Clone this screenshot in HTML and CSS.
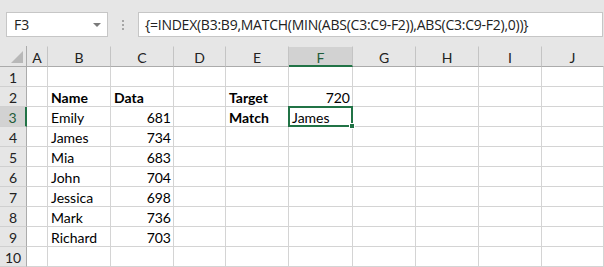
FILE: index.html
```html
<!DOCTYPE html>
<html>
<head>
<meta charset="utf-8">
<link rel="stylesheet" href="styles.css">
</head>
<body>
<div class="app">
  <div class="toolbar">
    <div class="namebox"><span class="name">F3</span><span class="caret"></span></div>
    <div class="grip"><i></i><i></i><i></i></div>
    <div class="formula">{=INDEX(B3:B9,MATCH(MIN(ABS(C3:C9-F2)),ABS(C3:C9-F2),0))}</div>
  </div>
  <div class="sheet">
    <div class="hd corner"><span class="tri"></span></div>
    <div class="hd col">A</div><div class="hd col">B</div><div class="hd col">C</div><div class="hd col">D</div><div class="hd col">E</div><div class="hd col sel">F</div><div class="hd col">G</div><div class="hd col">H</div><div class="hd col">I</div><div class="hd col last">J</div>

    <div class="hd row">1</div><div class="c"></div><div class="c"></div><div class="c"></div><div class="c"></div><div class="c"></div><div class="c"></div><div class="c"></div><div class="c"></div><div class="c"></div><div class="c"></div>

    <div class="hd row">2</div><div class="c"></div><div class="c b">Name</div><div class="c b">Data</div><div class="c"></div><div class="c b">Target</div><div class="c n">720</div><div class="c"></div><div class="c"></div><div class="c"></div><div class="c"></div>

    <div class="hd row rsel">3</div><div class="c"></div><div class="c">Emily</div><div class="c n">681</div><div class="c"></div><div class="c b">Match</div><div class="c active">James<span class="handle"></span></div><div class="c"></div><div class="c"></div><div class="c"></div><div class="c"></div>

    <div class="hd row">4</div><div class="c"></div><div class="c">James</div><div class="c n">734</div><div class="c"></div><div class="c"></div><div class="c"></div><div class="c"></div><div class="c"></div><div class="c"></div><div class="c"></div>

    <div class="hd row">5</div><div class="c"></div><div class="c">Mia</div><div class="c n">683</div><div class="c"></div><div class="c"></div><div class="c"></div><div class="c"></div><div class="c"></div><div class="c"></div><div class="c"></div>

    <div class="hd row">6</div><div class="c"></div><div class="c">John</div><div class="c n">704</div><div class="c"></div><div class="c"></div><div class="c"></div><div class="c"></div><div class="c"></div><div class="c"></div><div class="c"></div>

    <div class="hd row">7</div><div class="c"></div><div class="c">Jessica</div><div class="c n">698</div><div class="c"></div><div class="c"></div><div class="c"></div><div class="c"></div><div class="c"></div><div class="c"></div><div class="c"></div>

    <div class="hd row">8</div><div class="c"></div><div class="c">Mark</div><div class="c n">736</div><div class="c"></div><div class="c"></div><div class="c"></div><div class="c"></div><div class="c"></div><div class="c"></div><div class="c"></div>

    <div class="hd row">9</div><div class="c"></div><div class="c">Richard</div><div class="c n">703</div><div class="c"></div><div class="c"></div><div class="c"></div><div class="c"></div><div class="c"></div><div class="c"></div><div class="c"></div>

    <div class="hd row">10</div><div class="c"></div><div class="c"></div><div class="c"></div><div class="c"></div><div class="c"></div><div class="c"></div><div class="c"></div><div class="c"></div><div class="c"></div><div class="c"></div>
  </div>
</div>
</body>
</html>
```

FILE: styles.css
```css
* { box-sizing: border-box; }
html, body { margin: 0; padding: 0; background: #e6e6e6; }
.app {
  width: 604px;
  height: 267px;
  background: #e6e6e6;
  overflow: hidden;
  font-family: "Lato", "Open Sans", sans-serif;
}
.toolbar {
  height: 46px;
  display: flex;
  align-items: flex-start;
  padding: 12px 1px 0 6px;
}
.namebox {
  width: 102px;
  height: 25px;
  background: #fff;
  border: 1px solid #c6c6c6;
  display: flex;
  align-items: center;
  justify-content: space-between;
  padding: 0 6px 0 7px;
  font-family: "Open Sans", sans-serif;
  font-size: 14px;
  color: #222;
}
.caret {
  width: 0; height: 0;
  border-left: 4px solid transparent;
  border-right: 4px solid transparent;
  border-top: 4px solid #7a7a7a;
}
.grip {
  width: 30px;
  height: 25px;
  display: flex;
  flex-direction: column;
  align-items: center;
  justify-content: center;
  gap: 2px;
}
.grip i {
  display: block;
  width: 2px; height: 2px;
  background: #a6a6a6;
}
.formula {
  flex: 1;
  height: 25px;
  background: #fff;
  border: 1px solid #c6c6c6;
  padding: 0 0 0 6px;
  font-family: "Open Sans", sans-serif;
  font-size: 14px;
  line-height: 23px;
  color: #222;
  white-space: nowrap;
  letter-spacing: -0.25px;
}
.sheet {
  display: grid;
  grid-template-columns: 27px 21px 63px 63px 52px 63px 64px 63px 63px 63px 62px;
  grid-template-rows: 21px repeat(10, 20px);
  background: #fff;
}
.hd {
  background: #e6e6e6;
  font-size: 14px;
  color: #222;
  display: flex;
  align-items: center;
  justify-content: center;
}
.corner {
  position: relative;
  border-right: 1px solid #ababab;
  border-bottom: 1px solid #ababab;
}
.tri {
  position: absolute;
  right: 3px;
  bottom: 3px;
  width: 0; height: 0;
  border-left: 12px solid transparent;
  border-bottom: 12px solid #b8b8b8;
}
.col {
  border-bottom: 1px solid #ababab;
  border-right: 1px solid #c4c4c4;
  padding-top: 2px;
  border-top: 1px solid #e6e6e6;
}
.col.last { border-right-color: #e6e6e6; }
.col.sel {
  background: #d2d2d2;
  border-bottom: 2px solid #217346;
  color: #1f5c3a;
  padding-top: 3px;
}
.row {
  border-right: 1px solid #ababab;
  border-bottom: 1px solid #d0d0d0;
  padding-top: 1px;
}
.row.rsel {
  background: #d2d2d2;
  border-right: 2px solid #217346;
  color: #1f5c3a;
}
.c {
  border-right: 1px solid #d4d4d4;
  border-bottom: 1px solid #d4d4d4;
  font-size: 14px;
  color: #000;
  padding: 0 3px;
  display: flex;
  align-items: flex-end;
  line-height: 17px;
  white-space: nowrap;
  overflow: visible;
}
.c.b { font-weight: bold; }
.c.n { justify-content: flex-end; padding-right: 2px; }
.active {
  position: relative;
  outline: 2px solid #217346;
  outline-offset: -2px;
  margin-top: -1px;
  margin-left: -1px;
  padding-left: 4px;
}
.handle {
  position: absolute;
  right: -3px;
  bottom: -3px;
  width: 6px;
  height: 6px;
  background: #217346;
  border: 1px solid #fff;
}
```
